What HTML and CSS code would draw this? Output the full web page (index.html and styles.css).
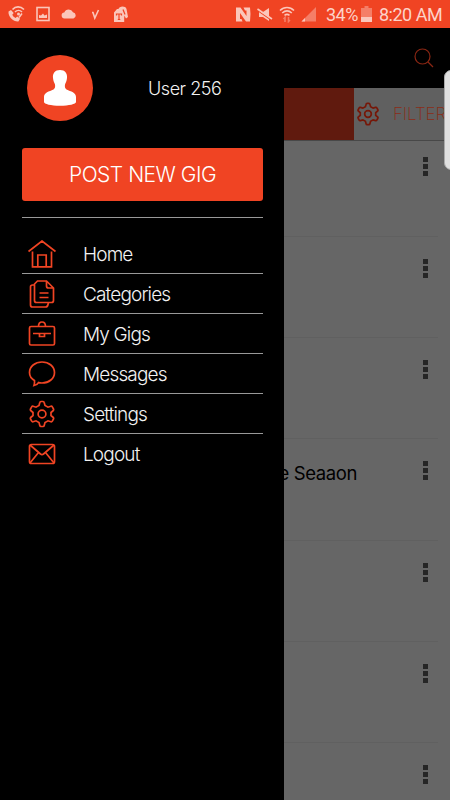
FILE: index.html
```
<!DOCTYPE html>
<html lang="en">
<head>
    <meta charset="UTF-8">
    <meta name="viewport" content="width=device-width, initial-scale=1.0">
    <title>Gigs</title>
    <link rel="stylesheet" href="styles.css">
</head>
<body>
    <svg class="symbols">
        <symbol id="gear" viewBox="0 0 28 28">
            <path d="M11 5.500 11.800 2.500Q12 1.500 13 1.500H15Q16 1.500 16.200 2.500L17 5.500 20 7.200 22.900 6.300Q23.800 6 24.300 6.900L25.500 9Q26 9.900 25.300 10.500L23 12.500V15.500L25.300 17.500Q26 18.100 25.500 19L24.300 21.100Q23.800 22 22.900 21.700L20 20.800 17 22.500 16.200 25.500Q16 26.500 15 26.500H13Q12 26.500 11.800 25.500L11 22.500 8 20.800 5.100 21.700Q4.200 22 3.700 21.100L2.500 19Q2 18.100 2.700 17.500L5 15.500V12.500L2.700 10.500Q2 9.900 2.500 9L3.700 6.900Q4.200 6 5.100 6.300L8 7.200Z"/>
            <circle cx="14" cy="14" r="3.900"/>
        </symbol>
    </svg>

    <div class="status-bar">
        <div class="status-left">
            <svg width="18" height="18" viewBox="0 0 18 18">
                <path class="fill" d="M.5 6.500 3 5l2.700 3-1.400 1.800c.7 1.500 1.700 2.500 3.200 3.200l1.700-1.400 2.900 2.200-1.700 2.700C5.700 17 0 12 .5 6.500Z"/>
                <path class="line" d="M4.500 4.500c3-3.500 8-3.500 11.500 0M7 7c2-2 5-2 7 0M14 8.500l-3 4"/>
                <circle class="fill" cx="10.500" cy="9" r="1.500"/>
            </svg>
            <svg width="14" height="16" viewBox="0 0 14 16">
                <rect class="line" x="1" y="1.500" width="12" height="13"/>
                <path class="fill" d="M3 12V9l2 .5L7 7.500l1.500 2L11 8.500V12Z"/>
            </svg>
            <svg width="16" height="12" viewBox="0 0 16 12">
                <path class="fill" d="M4 10.500a3 3 0 0 1-.7-6A4.700 4.700 0 0 1 12 4.300a3.200 3.200 0 0 1 .5 6.200Z"/>
            </svg>
            <svg width="9" height="12" viewBox="0 0 9 12">
                <path class="line" d="M1 4.500H2L3.800 10 7.500 2"/>
            </svg>
            <svg width="16" height="17" viewBox="0 0 16 17">
                <path class="fill" d="M1 6.500 4 3h1.500c.5-3 7-3.500 8 0l1.500 8-2 1.500-1.800-3V16H1Z"/>
                <path class="cut" d="M3.500 9.500V8h5v1.500M6 8v5M4.800 13.500h2.500M10 3.500l2 5"/>
            </svg>
        </div>
        <div class="status-right">
            <svg class="nfc" width="15" height="15" viewBox="0 0 15 15">
                <path class="fill" d="M0 .5H4.500L10.500 9V3.500H9L7.500.5H14Q15 7 14 14.500H10L4 6v6h1.500l1 2.500H0Z"/>
            </svg>
            <svg class="mute" width="16" height="15" viewBox="0 0 16 15">
                <path class="fill" d="M2 5h4l6-4v13l-6-4H2Z"/>
                <path class="cut" d="M1 3.800 15 13.500"/>
                <path class="line" d="M.5 2 15 12"/>
            </svg>
            <svg class="wifi" width="16" height="17" viewBox="0 0 16 17">
                <path class="line" d="M1 4.500c4-4 10-4 14 0M3.200 7c3-2.700 6.600-2.700 9.600 0M5.500 9.300c1.800-1.300 3.200-1.300 5 0"/>
                <path class="line dim" d="M6 16v-4.500L4.500 13M9.500 11v4.500L11 14"/>
            </svg>
            <svg class="signal" width="15" height="15" viewBox="0 0 15 15">
                <path class="fill dim" d="M15 0v14.500H.5Z"/>
                <path class="fill" d="M4 11v3.500H.5Z"/>
            </svg>
            <span class="percent">34%</span>
            <svg class="battery" width="11" height="16" viewBox="0 0 11 16">
                <path class="fill dim" d="M3.500 0h4v2H11v9H0V2h3.500Z"/>
                <path class="fill" d="M0 11h11v5H0Z"/>
            </svg>
            <span class="clock">8:20 AM</span>
        </div>
    </div>

    <div class="screen">
        <div class="toolbar">
            <svg class="search" width="20" height="20" viewBox="0 0 20 20">
                <circle cx="8.500" cy="8.500" r="7.500"/>
                <path d="m14 14 5 5"/>
            </svg>
        </div>
        <div class="tabs">
            <div class="tab-active"></div>
            <div class="tab-filter">
                <svg class="filter-gear" width="24" height="24"><use href="#gear"/></svg>
                <span>FILTER</span>
            </div>
        </div>
        <div class="gigs">
            <div class="gig first"><div class="dots"><i></i><i></i><i></i></div></div>
            <div class="gig"><div class="dots"><i></i><i></i><i></i></div></div>
            <div class="gig"><div class="dots"><i></i><i></i><i></i></div></div>
            <div class="gig"><span class="gig-title">e Seaaon</span><div class="dots"><i></i><i></i><i></i></div></div>
            <div class="gig"><div class="dots"><i></i><i></i><i></i></div></div>
            <div class="gig"><div class="dots"><i></i><i></i><i></i></div></div>
            <div class="gig"><div class="dots"><i></i><i></i><i></i></div></div>
        </div>

        <div class="drawer">
            <div class="profile">
                <div class="avatar">
                    <svg width="34" height="38" viewBox="0 0 34 38">
                        <path d="M17 1c5 0 7.500 3.500 7 8-.3 3.500-1.500 5-2 6.500-.4 2 0 4 1.500 5C28 22.500 33 23.500 33 28v5c0 2-7 3.800-16 3.800S1 35 1 33v-5c0-4.500 5-5.500 9.500-7.500 1.500-1 1.900-3 1.500-5-.5-1.500-1.700-3-2-6.500C9.500 4.500 12 1 17 1Z"/>
                    </svg>
                </div>
                <span class="user-name">User 256</span>
            </div>
            <button class="post">POST NEW GIG</button>
            <ul class="menu">
                <li>
                    <svg width="28" height="28" viewBox="0 0 28 28"><path d="M.5 11.500 14 1l13.500 10.500M4.500 11.500v15.300h19V11.500M9.800 27V15h8.400v12"/></svg>
                    <span>Home</span>
                </li>
                <li>
                    <svg width="28" height="28" viewBox="0 0 28 28"><path d="M18.500 1H9.500L6.500 4v16.500q0 2 2 2h15q2 0 2-2V8ZM18.500 1v5q0 2 2 2h5M6.500 5h-2Q2.500 5 2.500 7v18q0 2 2 2H17.500q2 0 2.500-2.500l.5-2M11.500 13h9M11.500 17.500h9"/></svg>
                    <span>Categories</span>
                </li>
                <li>
                    <svg width="28" height="28" viewBox="0 0 28 28"><rect x="1.500" y="6.500" width="25" height="18.500" rx="1.500"/><path d="M10.500 6.500q0-4.500 3.500-4.500t3.500 4.500M5 13.500h18M11.500 13.500v3h5v-3"/></svg>
                    <span>My Gigs</span>
                </li>
                <li>
                    <svg width="28" height="28" viewBox="0 0 28 28"><path d="M6.500 20.500C3 18.500 1.500 15.500 1.500 12.500 1.500 6.500 7 2 14 2s12.500 4.500 12.500 10.500S21 23 14 23q-2 0-3.500-.4Q9.500 24.500 6 25.500q.8-2.500.5-5Z"/></svg>
                    <span>Messages</span>
                </li>
                <li>
                    <svg width="28" height="28"><use href="#gear"/></svg>
                    <span>Settings</span>
                </li>
                <li>
                    <svg width="28" height="28" viewBox="0 0 28 28"><rect x="1.500" y="3.500" width="25" height="19" rx="2"/><path d="m2 4 10.500 9q1.500 1.200 3 0L26 4M2 22l8.500-10.500M26 22l-8.500-10.500"/></svg>
                    <span>Logout</span>
                </li>
            </ul>
        </div>
        <div class="edge-handle"></div>
    </div>
</body>
</html>
```

FILE: styles.css
```
* {
    box-sizing: border-box;
}
body {
    margin: 0;
    width: 450px;
    height: 800px;
    overflow: hidden;
    background: #000;
    font-family: Inter, "Liberation Sans", sans-serif;
    font-weight: 300;
}
svg {
    display: block;
    flex-shrink: 0;
}
.symbols {
    position: absolute;
    width: 0;
    height: 0;
}

/* status bar */
.status-bar {
    display: flex;
    justify-content: space-between;
    height: 28px;
    padding: 0 8px;
    background: #f04423;
    color: #fdd3c9;
    font-family: Roboto, sans-serif;
    font-weight: 400;
    font-size: 18px;
}
.status-left,
.status-right {
    display: flex;
    align-items: center;
}
.status-left {
    gap: 10px;
}
.status-left svg:nth-child(3) {
    margin-left: 1px;
}
.status-left svg:nth-child(4) {
    margin-left: 4px;
}
.status-left svg:nth-child(5) {
    margin-left: 3px;
}
.fill {
    fill: #fbc6ba;
}
.line {
    fill: none;
    stroke: #fbc6ba;
    stroke-width: 1.6;
}
.cut {
    fill: none;
    stroke: #f04423;
    stroke-width: 1.2;
}
.dim {
    opacity: 0.45;
}
.mute,
.wifi,
.signal {
    margin-left: 6px;
}
.percent {
    width: 33px;
    margin-left: 10px;
    letter-spacing: -0.5px;
}
.battery {
    margin-left: 2px;
}
.clock {
    margin-left: 7px;
    width: 63px;
    letter-spacing: -0.5px;
    white-space: nowrap;
}

/* screen behind the drawer */
.screen {
    position: relative;
    height: 772px;
    overflow: hidden;
    background: #666;
}
.toolbar {
    display: flex;
    justify-content: flex-end;
    height: 60px;
    padding: 20px 16px 0 0;
    background: #000;
}
.search {
    fill: none;
    stroke: #8a2613;
    stroke-width: 1.2;
}
.tabs {
    display: flex;
    height: 53px;
    border-bottom: 1px solid #484848;
}
.tab-active {
    width: 354px;
    background: #601a0e;
}
.tab-filter {
    display: flex;
    align-items: center;
    width: 96px;
    padding-left: 2px;
    background: #606060;
    color: #8a2c16;
    font-size: 17px;
    font-weight: 200;
    letter-spacing: -0.1px;
}
.tab-filter span {
    margin-left: 13px;
}
.filter-gear {
    fill: none;
    stroke: #761708;
    stroke-width: 2;
}
.gig {
    display: flex;
    justify-content: flex-end;
    align-items: flex-start;
    height: 101.2px;
    margin-right: 12px;
    padding: 22px 10px 0 0;
    border-bottom: 1px solid #606060;
}
.gig.first {
    height: 96px;
    padding-top: 16px;
}
.gig-title {
    margin-right: 66px;
    color: #000;
    font-size: 18.5px;
    font-weight: 400;
    line-height: 24px;
    letter-spacing: -0.4px;
}
.dots {
    display: flex;
    flex-direction: column;
    gap: 2px;
}
.dots i {
    width: 5px;
    height: 5px;
    background: #262626;
}

/* drawer */
.drawer {
    position: absolute;
    top: 0;
    left: 0;
    width: 284px;
    height: 772px;
    padding: 27px 21px 0 22px;
    background: #000;
    color: #f2f2f2;
}
.profile {
    display: flex;
    align-items: center;
    height: 66px;
    padding-left: 5px;
}
.avatar {
    display: flex;
    align-items: center;
    justify-content: center;
    width: 66px;
    height: 66px;
    border-radius: 50%;
    background: #f04423;
}
.avatar path {
    fill: #fff;
}
.user-name {
    margin-left: 55px;
    font-size: 18px;
    letter-spacing: -0.45px;
}
.post {
    display: block;
    width: 241px;
    height: 53px;
    margin: 27px 0 16px;
    padding: 0;
    border: 0;
    border-radius: 3px;
    background: #f04423;
    color: #fff;
    font: inherit;
    font-size: 21px;
    letter-spacing: -0.5px;
}
.menu {
    margin: 0;
    padding: 16px 0 0;
    border-top: 1px solid #999;
    list-style: none;
}
.menu li {
    display: flex;
    align-items: center;
    height: 40px;
    padding: 1px 0 0 6px;
    border-bottom: 1px solid #999;
    font-size: 19px;
    letter-spacing: -0.85px;
}
.menu li:last-child {
    border-bottom: 0;
}
.menu svg {
    fill: none;
    stroke: #f04423;
    stroke-width: 1.7;
}
.menu span {
    margin-left: 27px;
}
.edge-handle {
    position: absolute;
    top: 42px;
    right: -8px;
    width: 14px;
    height: 100px;
    border: 1px solid #aaa;
    border-radius: 7px;
    background: #e0e0e0;
}
```
